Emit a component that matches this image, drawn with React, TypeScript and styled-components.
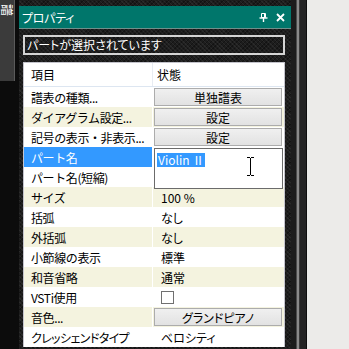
import React from "react";
import styled, { createGlobalStyle } from "styled-components";

const GlobalStyle = createGlobalStyle`
  html, body {
    margin: 0;
    padding: 0;
    background: #111;
  }
  body {
    font-family: "Noto Sans CJK JP", "Noto Sans", sans-serif;
    font-size: 12px;
  }
`;

type Row = {
  label: string;
  value?: string;
  kind?: "button" | "text" | "check" | "editor";
};

const rows: Row[] = [
  { label: "譜表の種類...", value: "単独譜表", kind: "button" },
  { label: "ダイアグラム設定...", value: "設定", kind: "button" },
  { label: "記号の表示・非表示...", value: "設定", kind: "button" },
  { label: "パート名", value: "Violin Ⅱ", kind: "editor" },
  { label: "パート名(短縮)", value: "", kind: "text" },
  { label: "サイズ", value: "100 %", kind: "text" },
  { label: "括弧", value: "なし", kind: "text" },
  { label: "外括弧", value: "なし", kind: "text" },
  { label: "小節線の表示", value: "標準", kind: "text" },
  { label: "和音省略", value: "通常", kind: "text" },
  { label: "VSTi使用", kind: "check" },
  { label: "音色...", value: "グランドピアノ", kind: "button" },
  { label: "クレッシェンドタイプ", value: "ベロシティ", kind: "text" },
];

const Page = styled.div`
  width: 349px;
  height: 349px;
  display: flex;
  overflow: hidden;
  background: #0c0c0c;
`;

const LeftStrip = styled.div`
  width: 15px;
  display: flex;
  flex-direction: column;
  margin-right: 4px;
`;

const SideTab = styled.div`
  height: 81px;
  background: #3b3b3b;
  border-right: 1px solid #5a5a5a;
  overflow: hidden;
  color: #fff;
  font-size: 12px;
  line-height: 12px;
`;

const SideLabel = styled.div`
  transform: rotate(90deg);
  width: 12px;
  margin-top: 4px;
  margin-left: 1px;
`;

const Panel = styled.div`
  width: 272px;
  display: flex;
  flex-direction: column;
  padding-top: 6px;
  background-color: #1d1d1d;
  background-image: repeating-linear-gradient(
      45deg,
      rgba(255, 255, 255, 0.06) 0 1px,
      transparent 1px 3px
    ),
    repeating-linear-gradient(
      -45deg,
      rgba(0, 0, 0, 0.35) 0 1px,
      transparent 1px 3px
    );
`;

const TitleBar = styled.div`
  height: 22px;
  background: #00766b;
  border-bottom: 1px solid #6f8f8b;
  display: flex;
  align-items: center;
  padding: 0 6px 0 3px;
  color: #fff;
  font-size: 12px;
  font-feature-settings: "palt";
`;

const TitleText = styled.span`
  flex: 1;
  letter-spacing: -0.3px;
`;

const TitleIcons = styled.div`
  display: flex;
  align-items: center;
  gap: 8px;
`;

const Body = styled.div`
  flex: 1;
  padding: 6px 6px 0 4px;
  display: flex;
  flex-direction: column;
  gap: 7px;
`;

const StatusBox = styled.div`
  height: 16px;
  border: 2px solid #d4d4d4;
  color: #fff;
  padding-left: 2px;
  display: flex;
  align-items: center;
  font-feature-settings: "palt";
  line-height: 16px;
`;

const Table = styled.div`
  background: #fff;
  border: 1px solid #c4c4cc;
  border-bottom: none;
  display: flex;
  flex-direction: column;
`;

const HeaderRow = styled.div`
  height: 23px;
  display: grid;
  grid-template-columns: 129px 1fr;
  border-bottom: 1px solid #dde6f1;
  color: #000;
`;

const HeaderCell = styled.div<{ $first?: boolean }>`
  display: flex;
  align-items: center;
  padding-left: ${(p) => (p.$first ? "7px" : "4px")};
  border-right: ${(p) => (p.$first ? "1px solid #e8ecf2" : "none")};
`;

const DataRow = styled.div<{ $alt: boolean }>`
  height: 20px;
  display: grid;
  grid-template-columns: 129px 1fr;
  background: ${(p) => (p.$alt ? "#f4f3df" : "#fff")};
  position: relative;
`;

const LabelCell = styled.div<{ $selected?: boolean; $narrow?: boolean }>`
  display: flex;
  align-items: center;
  padding-left: 7px;
  white-space: nowrap;
  overflow: hidden;
  background: ${(p) => (p.$selected ? "#3399ff" : "transparent")};
  color: ${(p) => (p.$selected ? "#fff" : "#000")};
  border-right: 1px solid #fff;
  font-feature-settings: ${(p) => (p.$narrow ? '"palt"' : "normal")};
  letter-spacing: ${(p) => (p.$narrow ? "-0.6px" : "-0.4px")};
`;

const ValueCell = styled.div`
  display: flex;
  align-items: center;
  padding-left: 8px;
  color: #000;
  white-space: nowrap;
  font-feature-settings: "palt";
`;

const ButtonCell = styled.div`
  display: flex;
  align-items: center;
  padding: 0 2px 0 1px;
`;

const CellButton = styled.div`
  flex: 1;
  height: 16px;
  border: 1px solid #acacac;
  background: linear-gradient(#f0f0f0, #e2e2e2);
  display: flex;
  align-items: center;
  justify-content: center;
  color: #000;
  font-feature-settings: "palt";
`;

const CheckBox = styled.div`
  width: 11px;
  height: 11px;
  border: 1px solid #707070;
  background: #fff;
`;

const Editor = styled.div`
  position: absolute;
  left: 130px;
  top: 1px;
  right: 1px;
  height: 37px;
  border: 1px solid #6b6b6b;
  background: #fff;
  z-index: 2;
  padding: 2px 0 0 2px;
`;

const Selected = styled.span`
  background: #3399ff;
  color: #fff;
  padding: 0 1px;
  line-height: 14px;
  display: inline-block;
`;

const Caret = styled.svg`
  position: absolute;
  left: 91px;
  top: 8px;
`;

const Gutter = styled.div`
  width: 16px;
  background: linear-gradient(
    to right,
    #1c1c1c 0 5px,
    #4c4c4c 5px 6px,
    #8a8a8a 6px 8px,
    #3a3a3a 8px 9px,
    #242424 9px 15px,
    #0e0e0e 15px 16px
  );
`;

const Paper = styled.div`
  flex: 1;
  background: #ecebe9;
`;

const PinIcon = () => (
  <svg width="9" height="9" viewBox="0 0 9 9">
    <path d="M2.5 0.5h4v4h-4z" fill="none" stroke="#fff" strokeWidth="1" />
    <path d="M5.5 0.5v4" stroke="#fff" strokeWidth="1" />
    <path d="M0.5 5h8" stroke="#fff" strokeWidth="1.4" />
    <path d="M4.5 5v4" stroke="#fff" strokeWidth="1.4" />
  </svg>
);

const CloseIcon = () => (
  <svg width="9" height="9" viewBox="0 0 9 9">
    <path d="M1 1l7 7M8 1L1 8" stroke="#fff" strokeWidth="1.8" />
  </svg>
);

const App = () => {
  return (
    <Page>
      <GlobalStyle />
      <LeftStrip>
        <SideTab>
          <SideLabel>譜</SideLabel>
        </SideTab>
      </LeftStrip>
      <Panel>
        <TitleBar>
          <TitleText>プロパティ</TitleText>
          <TitleIcons>
            <PinIcon />
            <CloseIcon />
          </TitleIcons>
        </TitleBar>
        <Body>
          <StatusBox>パートが選択されています</StatusBox>
          <Table>
            <HeaderRow>
              <HeaderCell $first>項目</HeaderCell>
              <HeaderCell>状態</HeaderCell>
            </HeaderRow>
            {rows.map((row, idx) => (
              <DataRow key={idx} $alt={idx % 2 === 1 && row.kind !== "editor"}>
                <LabelCell
                  $selected={row.kind === "editor"}
                  $narrow={row.label === "クレッシェンドタイプ"}
                >
                  {row.label}
                </LabelCell>
                {row.kind === "button" ? (
                  <ButtonCell>
                    <CellButton>{row.value}</CellButton>
                  </ButtonCell>
                ) : row.kind === "check" ? (
                  <ValueCell>
                    <CheckBox />
                  </ValueCell>
                ) : row.kind === "editor" ? (
                  <Editor>
                    <Selected>{row.value}</Selected>
                    <Caret width="9" height="19" viewBox="0 0 9 19">
                      <path
                        d="M1 0.5h3M5 0.5h3M4.5 1v17M1 18.5h3M5 18.5h3"
                        stroke="#000"
                        strokeWidth="1"
                      />
                    </Caret>
                  </Editor>
                ) : (
                  <ValueCell>{row.value}</ValueCell>
                )}
              </DataRow>
            ))}
          </Table>
        </Body>
      </Panel>
      <Gutter />
      <Paper />
    </Page>
  );
};

export default App;
